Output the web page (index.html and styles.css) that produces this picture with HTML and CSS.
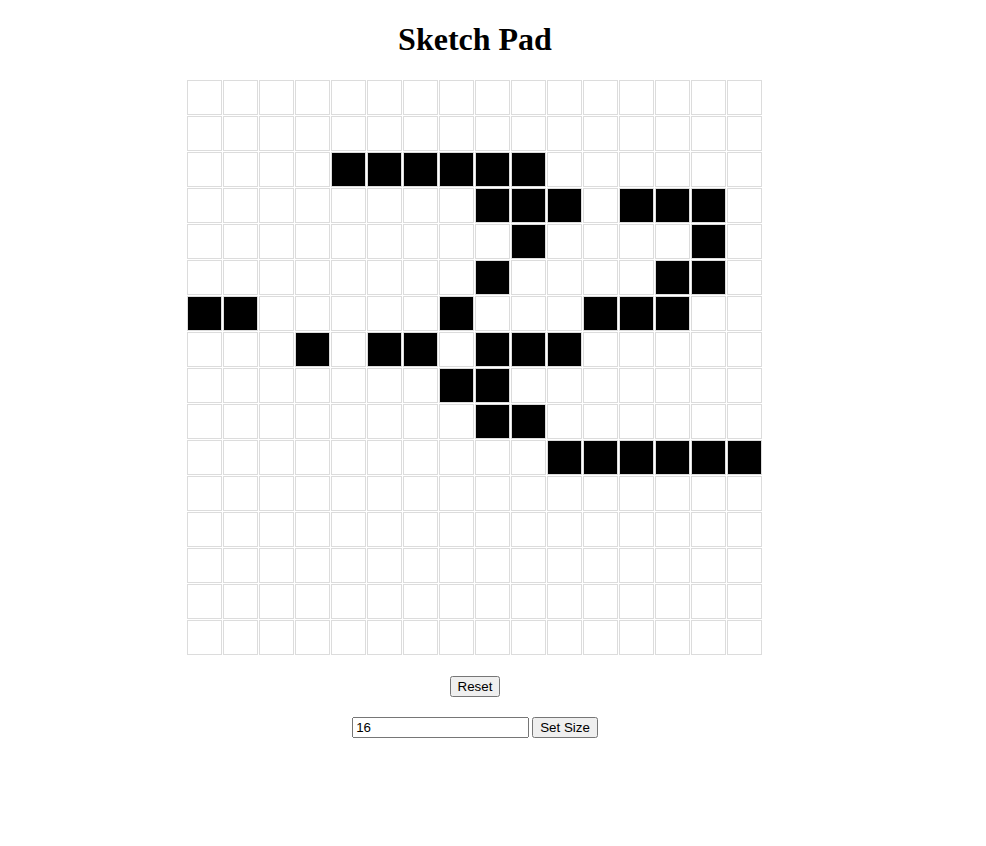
FILE: index.html
```html
<!DOCTYPE html>
<html>
<head>
<meta charset="utf-8">
<title>Sketch Pad</title>
<link rel="stylesheet" href="styles.css">
</head>
<body>
<div class="app">
  <h1 class="title">Sketch Pad</h1>
  <div class="grid" id="grid"></div>
  <div class="reset-row"><button class="btn" type="button">Reset</button></div>
  <div class="size-row"><input class="size-input" type="text" value="16"> <button class="btn" type="button">Set Size</button></div>
</div>
<script src="script.js"></script>
</body>
</html>
```
FILE: styles.css
```css
body {
  margin: 8px;
  font-family: "Liberation Serif", "Times New Roman", serif;
  background: #fff;
}
.app {
  width: 934px;
  display: flex;
  flex-direction: column;
  align-items: center;
}
.title {
  font-size: 32px;
  font-weight: bold;
  margin: 13px 0 22px;
  line-height: 37px;
}
.grid {
  width: 576px;
  display: grid;
  grid-template-columns: repeat(16, 35px);
  grid-auto-rows: 35px;
  gap: 1px;
}
.cell {
  box-sizing: border-box;
  border: 1px solid #dcdcdc;
  background: #fff;
}
.cell.on {
  background: #000;
}
.reset-row {
  margin-top: 21px;
}
.size-row {
  margin-top: 20px;
  display: flex;
  align-items: center;
  gap: 3px;
}
.btn {
  font-family: "Liberation Sans", Arial, sans-serif;
  font-size: 13.333px;
  margin: 0;
}
.size-input {
  font-family: "Liberation Sans", Arial, sans-serif;
  font-size: 13.333px;
  width: 169px;
  margin: 0;
}
```
FILE: script.js
```js
var on = {
  2: [4,5,6,7,8,9],
  3: [8,9,10,12,13,14],
  4: [9,14],
  5: [8,13,14],
  6: [0,1,7,11,12,13],
  7: [3,5,6,8,9,10],
  8: [7,8],
  9: [8,9],
  10: [10,11,12,13,14,15]
};
var grid = document.getElementById('grid');
for (var r = 0; r < 16; r++) {
  for (var c = 0; c < 16; c++) {
    var d = document.createElement('div');
    d.className = 'cell' + ((on[r] && on[r].indexOf(c) >= 0) ? ' on' : '');
    grid.appendChild(d);
  }
}
```
